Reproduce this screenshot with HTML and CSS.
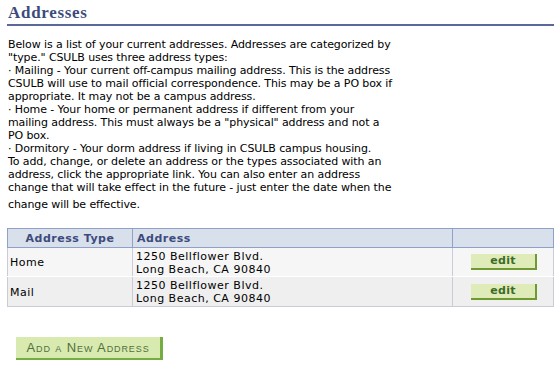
FILE: index.html
```html
<!DOCTYPE html>
<html>
<head>
<meta charset="utf-8">
<link rel="stylesheet" href="styles.css">
</head>
<body>
<div class="page">
  <h1 class="title">Addresses</h1>
  <div class="intro">
    <p class="lines">Below is a list of your current addresses. Addresses are categorized by<br>"type." CSULB uses three address types:<br>· Mailing - Your current off-campus mailing address. This is the address<br>CSULB will use to mail official correspondence. This may be a PO box if<br>appropriate. It may not be a campus address.<br>· Home - Your home or permanent address if different from your<br>mailing address. This must always be a "physical" address and not a<br>PO box.<br>· Dormitory - Your dorm address if living in CSULB campus housing.<br>To add, change, or delete an address or the types associated with an<br>address, click the appropriate link. You can also enter an address<br>change that will take effect in the future - just enter the date when the</p>
    <p class="last">change will be effective.</p>
  </div>
  <table class="grid">
    <thead>
      <tr>
        <th class="c-type">Address Type</th>
        <th class="c-addr">Address</th>
        <th class="c-act"></th>
      </tr>
    </thead>
    <tbody>
      <tr class="odd">
        <td class="c-type">Home</td>
        <td class="c-addr">1250 Bellflower Blvd.<br>Long Beach, CA 90840</td>
        <td class="c-act"><button class="edit">edit</button></td>
      </tr>
      <tr class="even">
        <td class="c-type">Mail</td>
        <td class="c-addr">1250 Bellflower Blvd.<br>Long Beach, CA 90840</td>
        <td class="c-act"><button class="edit">edit</button></td>
      </tr>
    </tbody>
  </table>
  <div class="actions">
    <button class="add">Add a New Address</button>
  </div>
</div>
</body>
</html>
```

FILE: styles.css
```css
html, body {
  margin: 0;
  padding: 0;
  background: #ffffff;
}
.page {
  padding: 4px 4px 0 7px;
  font-family: "DejaVu Sans", Verdana, sans-serif;
  color: #000;
}
.title {
  margin: 0;
  padding: 0 0 2px 1px;
  font-family: "Liberation Serif", "Times New Roman", serif;
  font-weight: bold;
  font-size: 17px;
  line-height: 18px;
  letter-spacing: 0.7px;
  color: #3d4b7c;
  border-bottom: 2px solid #5a6898;
}
.intro {
  padding: 12px 0 0 1px;
  font-size: 11px;
  letter-spacing: -0.1px;
}
.intro p {
  margin: 0;
}
.lines {
  line-height: 13px;
}
.last {
  line-height: 13px;
  margin-top: 4px !important;
}
.grid {
  margin-top: 17px;
  width: 547px;
  border-collapse: collapse;
  font-size: 11px;
  letter-spacing: 0.5px;
}
.grid th {
  background: #d8e0ec;
  border: 1px solid #8fa1c8;
  height: 18px;
  padding: 0 4px;
  color: #3d4b7c;
  font-weight: bold;
  text-align: left;
  letter-spacing: 0.5px;
}
.grid th.c-type {
  text-align: center;
  width: 116px;
}
.grid th.c-addr {
  width: 311px;
}
.grid td {
  border-left: 1px solid #c9ccd6;
  border-right: 1px solid #c9ccd6;
  padding: 1px 3px 0 3px;
  line-height: 13px;
  vertical-align: middle;
}
.grid td.c-addr,
.grid td.c-act {
  border-left: 1px solid #ffffff;
}
.grid tr.odd td {
  background: #f6f6f6;
  height: 27px;
  border-bottom: 1px solid #ffffff;
}
.grid tr.even td {
  background: #efefef;
  height: 28px;
  border-bottom: 1px solid #c9ccd6;
}
.grid td.c-type {
  padding-left: 2px;
}
.grid td.c-act {
  text-align: center;
  padding: 0;
}
.edit {
  display: inline-block;
  width: 66px;
  height: 16px;
  margin-left: 2px;
  padding: 0;
  border: 0;
  border-right: 2px solid #6e9a2f;
  border-bottom: 2px solid #6e9a2f;
  background: #dfebb8;
  color: #3c6b27;
  font-family: "DejaVu Sans", Verdana, sans-serif;
  font-size: 11px;
  font-weight: bold;
  line-height: 14px;
  letter-spacing: 0.3px;
}
.actions {
  padding: 30px 0 0 9px;
}
.add {
  display: inline-block;
  width: 147px;
  height: 23px;
  padding: 0;
  border: 0;
  border-right: 3px solid #74ae43;
  border-bottom: 2px solid #74ae43;
  background: #d8eaaf;
  color: #52703e;
  font-family: "Liberation Sans", Arial, sans-serif;
  font-variant: small-caps;
  font-size: 13px;
  letter-spacing: 0.9px;
  line-height: 21px;
}
```
